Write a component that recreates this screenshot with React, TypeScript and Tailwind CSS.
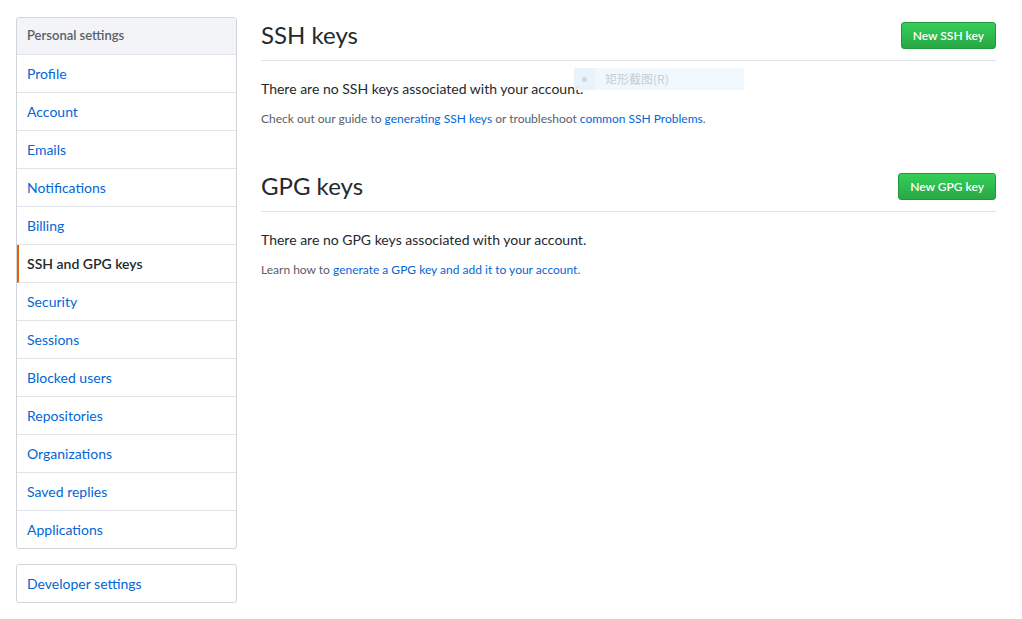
import { ReactNode } from "react";

const navItems = [
  "Profile",
  "Account",
  "Emails",
  "Notifications",
  "Billing",
  "SSH and GPG keys",
  "Security",
  "Sessions",
  "Blocked users",
  "Repositories",
  "Organizations",
  "Saved replies",
  "Applications",
];

const active = "SSH and GPG keys";

function GreenButton({ children }: { children: ReactNode }) {
  return (
    <button className="h-[27px] px-[11px] rounded-[3px] border border-[#1f9a3a] bg-gradient-to-b from-[#34d058] to-[#28a745] text-white text-[12px] font-semibold leading-none">
      {children}
    </button>
  );
}

function SectionHeader({ title, button }: { title: string; button: string }) {
  return (
    <div className="h-[44px] flex items-center justify-between border-b border-[#e1e4e8]">
      <h2 className="text-[24px] leading-[30px] text-[#24292e] pb-[7px] font-normal">{title}</h2>
      <div className="pb-[6px]">
        <GreenButton>{button}</GreenButton>
      </div>
    </div>
  );
}

export default function App() {
  return (
    <div
      className="relative w-[1022px] h-[619px] bg-white overflow-hidden"
      style={{ fontFamily: 'Lato, "Noto Sans", sans-serif' }}
    >
      <div className="flex pl-4 pr-[26px] pt-[17px] gap-6">
        {/* Sidebar */}
        <div className="w-[221px] shrink-0">
          <nav className="border border-[#d1d5da] rounded-[3px] overflow-hidden">
            <div className="h-[37px] flex items-center px-[10px] bg-[#f3f4f7] border-b border-[#e1e4e8] text-[13px] font-semibold text-[#586069]">
              Personal settings
            </div>
            {navItems.map((item, i) => (
              <div
                key={item}
                className={`flex items-center text-[14px] ${
                  i < navItems.length - 1 ? "h-[38px] border-b border-[#e1e4e8]" : "h-[37px]"
                } ${
                  item === active
                    ? "border-l-2 border-l-[#e36209] pl-[8px] font-semibold text-[#24292e]"
                    : "pl-[10px] text-[#0366d6]"
                }`}
              >
                {item}
              </div>
            ))}
          </nav>
          <div className="mt-[15px] h-[39px] flex items-center px-[10px] border border-[#d1d5da] rounded-[3px] text-[14px] text-[#0366d6]">
            Developer settings
          </div>
        </div>

        {/* Main */}
        <div className="flex-1">
          <SectionHeader title="SSH keys" button="New SSH key" />
          <p className="mt-[17px] text-[14px] leading-[21px] text-[#24292e]">
            There are no SSH keys associated with your account.
          </p>
          <p className="mt-[11px] text-[12px] leading-[18px] text-[#586069]">
            Check out our guide to <span className="text-[#0366d6]">generating SSH keys</span> or
            troubleshoot <span className="text-[#0366d6]">common SSH Problems</span>.
          </p>

          <div className="mt-[40px]">
            <SectionHeader title="GPG keys" button="New GPG key" />
          </div>
          <p className="mt-[17px] text-[14px] leading-[21px] text-[#24292e]">
            There are no GPG keys associated with your account.
          </p>
          <p className="mt-[11px] text-[12px] leading-[18px] text-[#586069]">
            Learn how to{" "}
            <span className="text-[#0366d6]">generate a GPG key and add it to your account</span>.
          </p>
        </div>
      </div>

      {/* Screenshot tool menu ghost */}
      <div className="absolute left-[574px] top-[68px] w-[170px] h-[22px] flex items-center bg-[#eef6fd]/80">
        <div className="w-[21px] h-full flex items-center justify-center bg-[#e6f1fb]/80">
          <span className="w-[5px] h-[5px] rounded-full bg-[#cfd8e2]" />
        </div>
        <span
          className="ml-[10px] text-[12px] text-[#c5cdd6]"
          style={{ fontFamily: '"Noto Sans CJK SC", sans-serif' }}
        >
          矩形截图(R)
        </span>
      </div>
    </div>
  );
}
